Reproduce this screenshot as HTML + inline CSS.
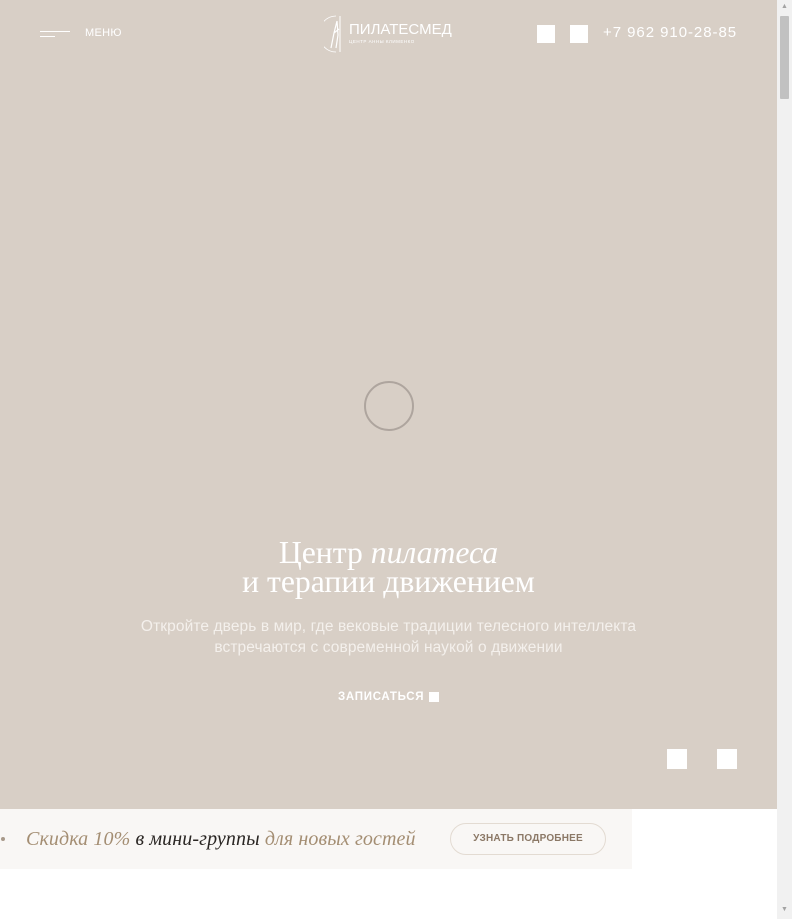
<!DOCTYPE html>
<html><head><meta charset="utf-8"><style>
*{margin:0;padding:0;box-sizing:border-box}
html,body{width:792px;height:919px;overflow:hidden;background:#fff;font-family:"Liberation Sans","DejaVu Sans",sans-serif}
.hero{position:absolute;left:0;top:0;width:777px;height:809px;background:#d8cfc6}
.sb{position:absolute;left:777px;top:0;width:15px;height:919px;background:#f1f1f1}
.sb .th{position:absolute;left:3px;top:16px;width:9px;height:83px;background:#c1c1c1;border-radius:1px}
.sb .up,.sb .dn{position:absolute;left:4px;font-size:7px;color:#a3a3a3}
.burger{position:absolute;left:40px;top:31px}
.burger i{display:block;height:1px;background:#fff;margin-bottom:4px}
.menu{position:absolute;left:85px;top:27px;font-size:11px;color:#fff;letter-spacing:.3px}
.logo{position:absolute;left:324px;top:15px}
.lt{position:absolute;left:349px;top:21px;font-size:15px;color:#fff;letter-spacing:0}
.ls{position:absolute;left:349px;top:39px;font-size:4.5px;color:#fff;letter-spacing:.5px}
.sq{position:absolute;background:#fff}
.phone{position:absolute;left:603px;top:24px;font-size:15px;color:#fff;letter-spacing:.95px}
.loader{position:absolute;left:364px;top:381px;width:50px;height:50px;border:2px solid #aea59e;border-radius:50%}
h1{position:absolute;left:0;width:777px;top:538px;text-align:center;font-family:"Liberation Serif",serif;font-weight:normal;font-size:31.7px;line-height:29px;color:#fff}
h1 em{font-style:italic}
.sub{position:absolute;left:0;width:777px;top:616px;text-align:center;font-size:15.5px;line-height:21px;color:#f4f0ec;letter-spacing:.1px}
.cta{position:absolute;left:338px;top:691px;font-size:11.5px;font-weight:bold;color:#fff;letter-spacing:.7px}
.bar{position:absolute;left:0;top:809px;width:632px;height:60px;background:#f9f7f5}
.dot{position:absolute;left:1px;top:837px;width:4px;height:4px;border-radius:50%;background:#a8998a}
.promo{position:absolute;left:26px;top:828px;font-family:"Liberation Serif",serif;font-style:italic;font-size:20px;color:#a48e73;letter-spacing:.1px}
.promo b{font-weight:normal;color:#2a2623}
.btn{position:absolute;left:450px;top:823px;width:156px;height:32px;border:1px solid #e3dbd2;border-radius:16px;text-align:center;line-height:30px;font-size:10px;font-weight:bold;color:#8b7866;letter-spacing:.2px}
</style></head><body>
<div class="hero"></div>
<div class="burger"><i style="width:30px"></i><i style="width:15px"></i></div>
<div class="menu">МЕНЮ</div>
<svg class="logo" width="24" height="38" viewBox="0 0 24 38"><path d="M12 1 A17 18 0 0 0 12 37" fill="none" stroke="#fff" stroke-width="0.8"/><line x1="16" y1="1" x2="16" y2="37" stroke="#fff" stroke-width="1"/><path d="M13 6 L10 18 L7 33 M13 6 L14 20 L12 33 M10 18 L15 14" stroke="#fff" stroke-width="1.2" fill="none"/></svg>
<div class="lt">ПИЛАТЕСМЕД</div>
<div class="ls">ЦЕНТР АННЫ КЛИМЕНКО</div>
<div class="sq" style="left:537px;top:25px;width:18px;height:18px"></div>
<div class="sq" style="left:570px;top:25px;width:18px;height:18px"></div>
<div class="phone">+7 962 910-28-85</div>
<div class="loader"></div>
<h1>Центр <em>пилатеса</em><br>и терапии движением</h1>
<div class="sub">Откройте дверь в мир, где вековые традиции телесного интеллекта<br>встречаются с современной наукой о движении</div>
<div class="cta">ЗАПИСАТЬСЯ</div>
<div class="sq" style="left:429px;top:692px;width:10px;height:10px"></div>
<div class="sq" style="left:667px;top:749px;width:20px;height:20px"></div>
<div class="sq" style="left:717px;top:749px;width:20px;height:20px"></div>
<div class="bar"></div>
<div class="dot"></div>
<div class="promo">Скидка 10% <b>в мини-группы</b> для новых гостей</div>
<div class="btn">УЗНАТЬ ПОДРОБНЕЕ</div>
<div class="sb"><span class="up" style="top:3px">▲</span><div class="th"></div><span class="dn" style="top:906px">▼</span></div>
</body></html>
